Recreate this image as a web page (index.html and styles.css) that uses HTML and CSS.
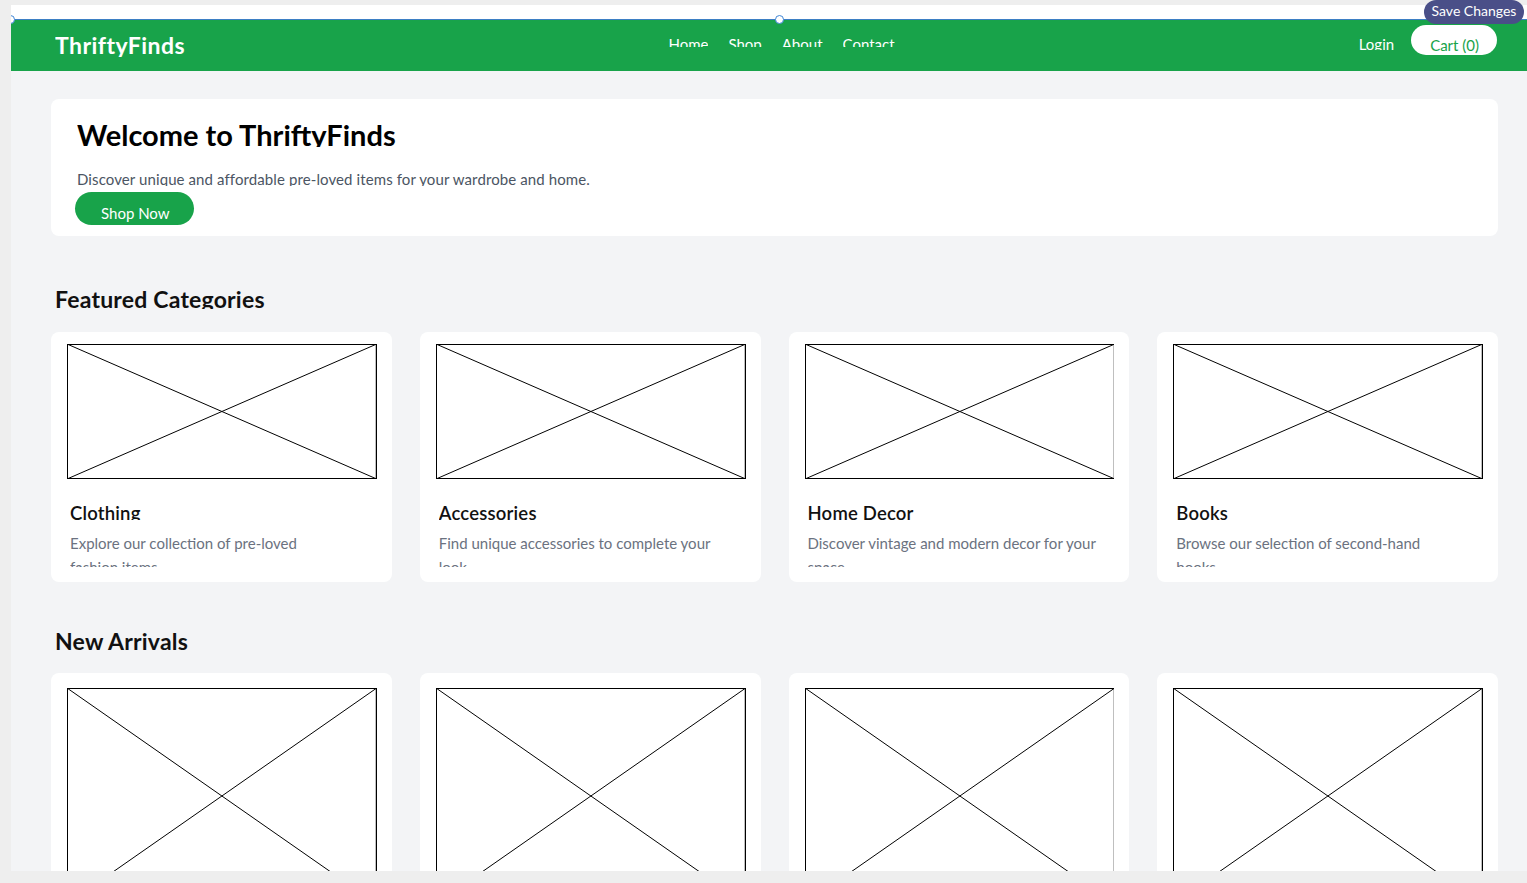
FILE: index.html
```html
<!DOCTYPE html>
<html>
<head>
<meta charset="utf-8">
<link rel="stylesheet" href="styles.css">
</head>
<body>
<div class="frame">
  <div class="topbar"></div>
  <span class="handle handle-left"></span>
  <span class="handle handle-mid"></span>
  <header class="header">
    <div class="logo">ThriftyFinds</div>
    <nav class="nav">
      <a class="nav-link">Home</a>
      <a class="nav-link">Shop</a>
      <a class="nav-link">About</a>
      <a class="nav-link">Contact</a>
    </nav>
    <div class="actions">
      <a class="login">Login</a>
      <a class="cart">Cart (0)</a>
    </div>
  </header>
  <main class="main">
    <section class="hero">
      <h1 class="hero-title">Welcome to ThriftyFinds</h1>
      <p class="hero-text">Discover unique and affordable pre-loved items for your wardrobe and home.</p>
      <a class="btn-shop">Shop Now</a>
    </section>

    <h2 class="section-title">Featured Categories</h2>
    <div class="grid">
      <div class="card">
        <svg class="ph ph-short" viewBox="0 0 100 100" preserveAspectRatio="none"><rect x="0" y="0" width="100" height="100" fill="#fff" stroke="#000" stroke-width="2" vector-effect="non-scaling-stroke"/><line x1="0" y1="0" x2="100" y2="100" stroke="#000" vector-effect="non-scaling-stroke"/><line x1="100" y1="0" x2="0" y2="100" stroke="#000" vector-effect="non-scaling-stroke"/></svg>
        <h3 class="card-title">Clothing</h3>
        <p class="card-text">Explore our collection of pre-loved<br>fashion items</p>
      </div>
      <div class="card">
        <svg class="ph ph-short" viewBox="0 0 100 100" preserveAspectRatio="none"><rect x="0" y="0" width="100" height="100" fill="#fff" stroke="#000" stroke-width="2" vector-effect="non-scaling-stroke"/><line x1="0" y1="0" x2="100" y2="100" stroke="#000" vector-effect="non-scaling-stroke"/><line x1="100" y1="0" x2="0" y2="100" stroke="#000" vector-effect="non-scaling-stroke"/></svg>
        <h3 class="card-title">Accessories</h3>
        <p class="card-text">Find unique accessories to complete your<br>look</p>
      </div>
      <div class="card">
        <svg class="ph ph-short" viewBox="0 0 100 100" preserveAspectRatio="none"><rect x="0" y="0" width="100" height="100" fill="#fff" stroke="#000" stroke-width="2" vector-effect="non-scaling-stroke"/><line x1="0" y1="0" x2="100" y2="100" stroke="#000" vector-effect="non-scaling-stroke"/><line x1="100" y1="0" x2="0" y2="100" stroke="#000" vector-effect="non-scaling-stroke"/></svg>
        <h3 class="card-title">Home Decor</h3>
        <p class="card-text">Discover vintage and modern decor for your<br>space</p>
      </div>
      <div class="card">
        <svg class="ph ph-short" viewBox="0 0 100 100" preserveAspectRatio="none"><rect x="0" y="0" width="100" height="100" fill="#fff" stroke="#000" stroke-width="2" vector-effect="non-scaling-stroke"/><line x1="0" y1="0" x2="100" y2="100" stroke="#000" vector-effect="non-scaling-stroke"/><line x1="100" y1="0" x2="0" y2="100" stroke="#000" vector-effect="non-scaling-stroke"/></svg>
        <h3 class="card-title">Books</h3>
        <p class="card-text">Browse our selection of second-hand<br>books</p>
      </div>
    </div>

    <h2 class="section-title section-title-2">New Arrivals</h2>
    <div class="grid">
      <div class="card card-tall">
        <svg class="ph ph-tall" viewBox="0 0 100 100" preserveAspectRatio="none"><rect x="0" y="0" width="100" height="100" fill="#fff" stroke="#000" stroke-width="2" vector-effect="non-scaling-stroke"/><line x1="0" y1="0" x2="100" y2="100" stroke="#000" vector-effect="non-scaling-stroke"/><line x1="100" y1="0" x2="0" y2="100" stroke="#000" vector-effect="non-scaling-stroke"/></svg>
      </div>
      <div class="card card-tall">
        <svg class="ph ph-tall" viewBox="0 0 100 100" preserveAspectRatio="none"><rect x="0" y="0" width="100" height="100" fill="#fff" stroke="#000" stroke-width="2" vector-effect="non-scaling-stroke"/><line x1="0" y1="0" x2="100" y2="100" stroke="#000" vector-effect="non-scaling-stroke"/><line x1="100" y1="0" x2="0" y2="100" stroke="#000" vector-effect="non-scaling-stroke"/></svg>
      </div>
      <div class="card card-tall">
        <svg class="ph ph-tall" viewBox="0 0 100 100" preserveAspectRatio="none"><rect x="0" y="0" width="100" height="100" fill="#fff" stroke="#000" stroke-width="2" vector-effect="non-scaling-stroke"/><line x1="0" y1="0" x2="100" y2="100" stroke="#000" vector-effect="non-scaling-stroke"/><line x1="100" y1="0" x2="0" y2="100" stroke="#000" vector-effect="non-scaling-stroke"/></svg>
      </div>
      <div class="card card-tall">
        <svg class="ph ph-tall" viewBox="0 0 100 100" preserveAspectRatio="none"><rect x="0" y="0" width="100" height="100" fill="#fff" stroke="#000" stroke-width="2" vector-effect="non-scaling-stroke"/><line x1="0" y1="0" x2="100" y2="100" stroke="#000" vector-effect="non-scaling-stroke"/><line x1="100" y1="0" x2="0" y2="100" stroke="#000" vector-effect="non-scaling-stroke"/></svg>
      </div>
    </div>
  </main>
</div>
<button class="save-btn">Save Changes</button>
</body>
</html>
```
FILE: styles.css
```css
* { box-sizing: border-box; }
html, body { margin: 0; padding: 0; }
body {
  background: #eeeeee;
  overflow: hidden;
  font-family: Lato, "Noto Sans", sans-serif;
  height: 883px;
}
.frame {
  position: relative;
  margin: 5px 0 0 11px;
  width: 1527px;
  height: 866px;
  overflow: hidden;
  background: #f3f4f6;
}
.topbar { height: 14px; background: #fff; }
.handle {
  position: absolute;
  top: 10px;
  width: 9px;
  height: 9px;
  border-radius: 50%;
  background: #fff;
  border: 1.5px solid #3f86d6;
  z-index: 3;
}
.handle-left { left: -5px; }
.handle-mid { left: 764px; }
.header {
  height: 52px;
  background: #18a34a;
  box-shadow: inset 0 1px 0 #3d7fc4;
  display: grid;
  grid-template-columns: 1fr auto 1fr;
  align-items: start;
  padding: 0 41px 0 44px;
}
.logo {
  justify-self: start;
  margin-top: 13px;
  font-size: 23px;
  letter-spacing: 0.45px;
  font-weight: 700;
  line-height: 26px;
  height: 25px;
  overflow: hidden;
  color: #fff;
}
.nav {
  display: flex;
  gap: 20px;
  margin-top: 16px;
  margin-left: 11px;
}
.nav-link {
  font-size: 15px;
  line-height: 18px;
  height: 11.5px;
  overflow: hidden;
  color: #fff;
}
.actions {
  justify-self: end;
  display: flex;
  align-items: flex-start;
  gap: 17px;
  margin-top: 6px;
}
.login {
  margin-top: 10px;
  font-size: 15px;
  line-height: 18px;
  height: 14.5px;
  overflow: hidden;
  color: #fff;
}
.cart {
  height: 30px;
  padding: 0 18px 0 19px;
  border-radius: 15px;
  background: #fff;
  color: #18a34a;
  font-size: 15px;
  line-height: 40px;
  overflow: hidden;
}
.main { padding: 28px 40px 0 40px; }
.hero {
  background: #fff;
  border-radius: 8px;
  height: 137px;
  padding: 18px 26px 0;
}
.hero-title {
  margin: 0;
  font-size: 29px;
  font-weight: 700;
  line-height: 35px;
  height: 30px;
  overflow: hidden;
  color: #000;
}
.hero-text {
  margin: 22.5px 0 0;
  font-size: 15px;
  letter-spacing: 0.1px;
  line-height: 18px;
  height: 16px;
  overflow: hidden;
  color: #4b5563;
}
.btn-shop {
  display: block;
  margin: 6.5px 0 0 -2px;
  width: 119px;
  height: 33px;
  border-radius: 17px;
  background: #18a34a;
  color: #fff;
  font-size: 15px;
  line-height: 18px;
  padding: 12px 0 0 26px;
  overflow: hidden;
}
.section-title {
  margin: 50px 0 23px 4px;
  font-size: 23px;
  letter-spacing: 0.2px;
  font-weight: 700;
  line-height: 27px;
  height: 23px;
  overflow: hidden;
  color: #111;
}
.section-title-2 { margin-top: 46px; margin-bottom: 22px; }
.grid {
  display: grid;
  grid-template-columns: repeat(4, 1fr);
  column-gap: 28px;
}
.card {
  background: #fff;
  border-radius: 8px;
  padding: 12px 15px 15px 16px;
  height: 250px;
}
.card-tall { height: 300px; padding-top: 15px; }
.ph { display: block; width: 100%; }
.ph-short { height: 135px; }
.ph-tall { height: 216px; }
.card-title {
  margin: 22.5px 0 0 3px;
  font-size: 18.5px;
  letter-spacing: 0.2px;
  font-weight: 600;
  line-height: 22px;
  height: 18.5px;
  overflow: hidden;
  color: #111;
}
.card-text {
  margin: 11px 0 0 3px;
  font-size: 15px;
  line-height: 24px;
  height: 36px;
  overflow: hidden;
  color: #6b7280;
}
.save-btn {
  position: absolute;
  top: 0;
  right: 3px;
  width: 100px;
  height: 24px;
  border: none;
  border-radius: 12px;
  background: #4a4f88;
  color: #fff;
  font-family: Lato, "Noto Sans", sans-serif;
  font-size: 14px;
  padding: 0 0 3px;
  z-index: 5;
}
```
